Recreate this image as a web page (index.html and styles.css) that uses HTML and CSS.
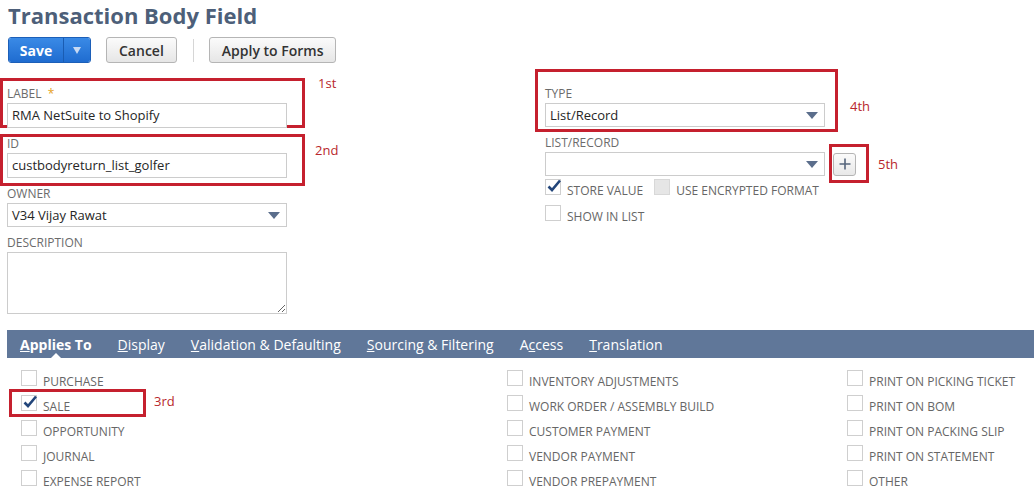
FILE: index.html
```html
<!DOCTYPE html>
<html lang="en">
<head>
    <meta charset="UTF-8">
    <title>Transaction Body Field</title>
    <link rel="stylesheet" href="styles.css">
</head>
<body>

    <h1 class="page-title">Transaction Body Field</h1>

    <div class="toolbar">
        <div class="split-button">
            <button class="btn-save">Save</button>
            <button class="btn-save-menu"><span class="caret"></span></button>
        </div>
        <button class="btn">Cancel</button>
        <span class="toolbar-sep"></span>
        <button class="btn">Apply to Forms</button>
    </div>

    <div class="form">
        <div class="form-col">
            <div class="field">
                <span class="mark mark-label"></span>
                <span class="mark-note note-label">1st</span>
                <label>Label <span class="required">*</span></label>
                <div class="input">RMA NetSuite to Shopify</div>
            </div>
            <div class="field">
                <span class="mark mark-id"></span>
                <span class="mark-note note-id">2nd</span>
                <label>ID</label>
                <div class="input">custbodyreturn_list_golfer</div>
            </div>
            <div class="field">
                <label>Owner</label>
                <div class="select">V34 Vijay Rawat<span class="select-arrow"></span></div>
            </div>
            <div class="field field-last">
                <label>Description</label>
                <textarea class="textarea"></textarea>
            </div>
        </div>

        <div class="form-col">
            <div class="field">
                <span class="mark mark-type"></span>
                <span class="mark-note note-type">4th</span>
                <label>Type</label>
                <div class="select">List/Record<span class="select-arrow"></span></div>
            </div>
            <div class="field field-tight">
                <label>List/Record</label>
                <div class="select-row">
                    <div class="select"><span class="select-arrow"></span></div>
                    <div class="plus-wrap">
                        <span class="mark mark-plus"></span>
                        <span class="mark-note note-plus">5th</span>
                        <button class="btn-plus">
                            <svg width="12" height="12" viewBox="0 0 12 12"><path d="M6 0.5V11.5M0.5 6H11.5" stroke="#55657c" stroke-width="1.6"/></svg>
                        </button>
                    </div>
                </div>
            </div>
            <div class="check-row check-row-first">
                <div class="check">
                    <span class="box checked"><svg width="16" height="16" viewBox="0 0 16 16"><path d="M2.5 8.5L6 12L14 2.5" fill="none" stroke="#22457a" stroke-width="2.6"/></svg></span>
                    <span class="check-label">Store Value</span>
                </div>
                <div class="check check-gap">
                    <span class="box disabled"></span>
                    <span class="check-label">Use Encrypted Format</span>
                </div>
            </div>
            <div class="check-row">
                <div class="check">
                    <span class="box"></span>
                    <span class="check-label">Show in List</span>
                </div>
            </div>
        </div>
    </div>

    <div class="tab-bar">
        <span class="tab active"><u>A</u>pplies To</span>
        <span class="tab"><u>D</u>isplay</span>
        <span class="tab"><u>V</u>alidation &amp; Defaulting</span>
        <span class="tab"><u>S</u>ourcing &amp; Filtering</span>
        <span class="tab">A<u>c</u>cess</span>
        <span class="tab"><u>T</u>ranslation</span>
    </div>

    <div class="applies-grid">
        <div class="check"><span class="box"></span><span class="check-label">Purchase</span></div>
        <div class="check"><span class="box"></span><span class="check-label">Inventory Adjustments</span></div>
        <div class="check"><span class="box"></span><span class="check-label">Print on Picking Ticket</span></div>

        <div class="check sale">
            <span class="mark mark-sale"></span>
            <span class="mark-note note-sale">3rd</span>
            <span class="box checked"><svg width="16" height="16" viewBox="0 0 16 16"><path d="M2.5 8.5L6 12L14 2.5" fill="none" stroke="#22457a" stroke-width="2.6"/></svg></span>
            <span class="check-label">Sale</span>
        </div>
        <div class="check"><span class="box"></span><span class="check-label">Work Order / Assembly Build</span></div>
        <div class="check"><span class="box"></span><span class="check-label">Print on BOM</span></div>

        <div class="check"><span class="box"></span><span class="check-label">Opportunity</span></div>
        <div class="check"><span class="box"></span><span class="check-label">Customer Payment</span></div>
        <div class="check"><span class="box"></span><span class="check-label">Print on Packing Slip</span></div>

        <div class="check"><span class="box"></span><span class="check-label">Journal</span></div>
        <div class="check"><span class="box"></span><span class="check-label">Vendor Payment</span></div>
        <div class="check"><span class="box"></span><span class="check-label">Print on Statement</span></div>

        <div class="check"><span class="box"></span><span class="check-label">Expense Report</span></div>
        <div class="check"><span class="box"></span><span class="check-label">Vendor Prepayment</span></div>
        <div class="check"><span class="box"></span><span class="check-label">Other</span></div>
    </div>

</body>
</html>
```

FILE: styles.css
```css
/* Transaction Body Field form */

:root {
    --title-color: #4d5f79;
    --label-color: #6b6b6b;
    --text-color: #262626;
    --border-color: #cccccc;
    --tab-color: #607799;
    --mark-color: #c5202e;
}

body {
    margin: 0;
    font-family: "Open Sans", "Liberation Sans", sans-serif;
    color: var(--text-color);
    background: #ffffff;
    overflow: hidden;
}

/* --- Title + toolbar --- */
.page-title {
    margin: 0;
    padding-left: 8px;
    font-size: 22px;
    line-height: 30px;
    font-weight: 700;
    color: var(--title-color);
}

.toolbar {
    display: flex;
    align-items: center;
    margin-top: 7px;
    padding-left: 8px;
}

.split-button {
    display: flex;
    height: 26px;
    border-radius: 3px;
    overflow: hidden;
    border: 1px solid #1c5fb8;
    box-sizing: border-box;
    width: 83px;
}

.btn-save,
.btn-save-menu {
    border: none;
    margin: 0;
    background: linear-gradient(#3a8ae6, #1f6cd0);
    color: #ffffff;
    font-family: inherit;
    font-size: 14px;
    font-weight: 700;
    padding: 0;
}

.btn-save {
    width: 55px;
    border-right: 1px solid #1a5cb2;
}

.btn-save-menu {
    flex: 1;
    display: flex;
    align-items: center;
    justify-content: center;
}

.caret {
    width: 0;
    height: 0;
    border-left: 4px solid transparent;
    border-right: 4px solid transparent;
    border-top: 7px solid #c8daf3;
    margin-top: 1px;
}

.btn {
    height: 26px;
    margin: 0 0 0 15px;
    padding: 0 12px;
    border: 1px solid #b5b5b5;
    border-radius: 3px;
    background: linear-gradient(#fbfbfb, #e6e6e6);
    font-family: inherit;
    font-size: 14px;
    font-weight: 600;
    color: #333333;
}

.toolbar-sep {
    width: 1px;
    height: 23px;
    background: #d6d6d6;
    margin-left: 16px;
}

/* --- Main form --- */
.form {
    display: grid;
    grid-template-columns: 538px 1fr;
    padding: 23px 0 0 7px;
}

.field {
    position: relative;
    width: 280px;
    margin-bottom: 8px;
}

.field-last {
    margin-bottom: 0;
}

.field-tight {
    margin-bottom: 0;
}

.field label {
    display: block;
    font-size: 12px;
    line-height: 16px;
    text-transform: uppercase;
    color: var(--label-color);
    margin-bottom: 1px;
}

.required {
    color: #e5a224;
    margin-left: 3px;
}

.input,
.select {
    position: relative;
    height: 25px;
    box-sizing: border-box;
    border: 1px solid var(--border-color);
    padding: 0 4px;
    font-size: 13px;
    line-height: 23px;
    color: var(--text-color);
    background: #ffffff;
}

.select {
    height: 24px;
    line-height: 22px;
}

.select-arrow {
    position: absolute;
    right: 6px;
    top: 8px;
    width: 0;
    height: 0;
    border-left: 6px solid transparent;
    border-right: 6px solid transparent;
    border-top: 7px solid #5b6e8c;
}

.textarea {
    display: block;
    width: 280px;
    height: 62px;
    box-sizing: border-box;
    border: 1px solid var(--border-color);
    margin: 0;
    font-family: inherit;
}

.select-row {
    display: flex;
    align-items: center;
    width: 330px;
}

.select-row .select {
    width: 280px;
    flex: none;
}

.plus-wrap {
    position: relative;
    margin-left: 8px;
}

.btn-plus {
    display: flex;
    align-items: center;
    justify-content: center;
    width: 23px;
    height: 23px;
    padding: 0;
    border: 1px solid #b5b5b5;
    border-radius: 3px;
    background: linear-gradient(#fbfbfb, #e8e8e8);
}

/* --- Checkboxes --- */
.check-row {
    display: flex;
    height: 26px;
}

.check-row-first {
    margin-top: 3px;
}

.check {
    position: relative;
    display: flex;
    align-items: flex-start;
    gap: 6px;
}

.check-gap {
    margin-left: 11px;
}

.box {
    width: 16px;
    height: 16px;
    box-sizing: border-box;
    border: 1px solid #cfcfcf;
    background: #ffffff;
    flex: none;
}

.box.checked svg {
    display: block;
    margin: -2px 0 0 0;
}

.box.disabled {
    background: #e6e6e6;
    border-color: #d8d8d8;
}

.check-label {
    font-size: 12px;
    line-height: 16px;
    padding-top: 4px;
    text-transform: uppercase;
    color: #666666;
    white-space: nowrap;
}

/* --- Subtabs --- */
.tab-bar {
    display: flex;
    margin: 16px 0 0 7px;
    padding-left: 0;
    height: 28px;
    background: var(--tab-color);
}

.tab {
    position: relative;
    padding: 0 13px;
    font-size: 14px;
    line-height: 29px;
    color: #ffffff;
    white-space: nowrap;
}

.tab.active {
    font-weight: 700;
}

.tab.active::after {
    content: "";
    position: absolute;
    left: 50%;
    bottom: 0;
    margin-left: -5px;
    border-left: 5px solid transparent;
    border-right: 5px solid transparent;
    border-bottom: 5px solid #ffffff;
}

.applies-grid {
    display: grid;
    grid-template-columns: 486px 340px auto;
    grid-auto-rows: 25px;
    padding: 12px 0 0 21px;
}

/* --- Red annotation marks drawn over the form --- */
.mark {
    position: absolute;
    border: 3px solid var(--mark-color);
    box-sizing: border-box;
    pointer-events: none;
}

.mark-note {
    position: absolute;
    font-size: 13px;
    line-height: 18px;
    color: #b8272c;
}

.mark-label { left: -7px; top: -8px; width: 305px; height: 50px; }
.note-label { left: 311px; top: -12px; }

.mark-id { left: -7px; top: -2px; width: 305px; height: 52px; }
.note-id { left: 308px; top: 5px; }

.mark-type { left: -10px; top: -17px; width: 303px; height: 63px; }
.note-type { left: 305px; top: 11px; }

.mark-plus { left: -4px; top: -9px; width: 40px; height: 39px; }
.note-plus { left: 45px; top: 2px; }

.mark-sale { left: -12px; top: -6px; width: 137px; height: 28px; }
.note-sale { left: 133px; top: -3px; }
```
